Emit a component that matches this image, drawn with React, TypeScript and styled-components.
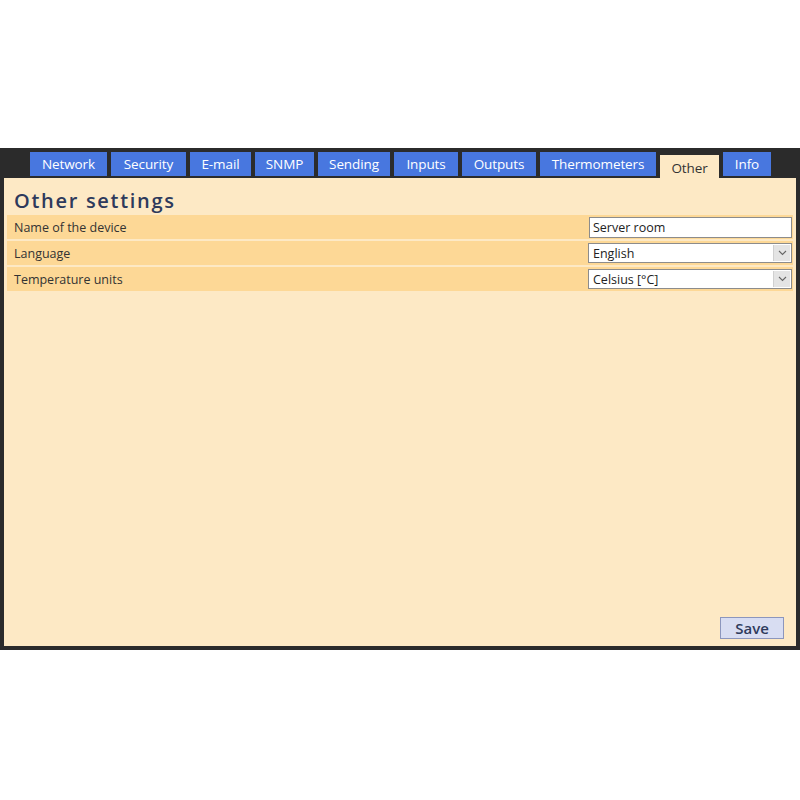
import React from "react";
import styled, { createGlobalStyle } from "styled-components";

const Global = createGlobalStyle`
  html, body { margin: 0; padding: 0; background: #ffffff; }
  body { font-family: "Open Sans", "DejaVu Sans", sans-serif; }
`;

const Page = styled.div`
  width: 800px;
  height: 800px;
  display: flex;
  flex-direction: column;
  justify-content: center;
`;

const Frame = styled.div`
  background: #2b2b2b;
  padding: 4px;
  height: 502px;
  box-sizing: border-box;
  display: flex;
  flex-direction: column;
  margin-top: -2px;
`;

const TabBar = styled.div`
  display: flex;
  gap: 4px;
  padding-left: 26px;
  height: 26px;
`;

const Tab = styled.div<{ $w: number }>`
  width: ${(p) => p.$w}px;
  height: 24px;
  background: #4877df;
  color: #ffffff;
  font-size: 13.5px;
  line-height: 24px;
  text-align: center;
  white-space: nowrap;
  letter-spacing: -0.1px;
`;

const ActiveTab = styled(Tab)`
  height: 23px;
  margin-top: 3px;
  background: #fde9c5;
  color: #333333;
  line-height: 27px;
`;

const Panel = styled.div`
  flex: 1;
  background: #fde9c5;
  display: flex;
  flex-direction: column;
  padding: 10px 3px 7px 3px;
`;

const Title = styled.h1`
  margin: 0 0 1px 7px;
  font-size: 20px;
  font-weight: 600;
  letter-spacing: 1.7px;
  color: #2e3a5c;
  line-height: 26px;
`;

const Rows = styled.div`
  display: flex;
  flex-direction: column;
  gap: 2px;
`;

const Row = styled.div`
  height: 24px;
  background: #fdd896;
  display: flex;
  align-items: center;
  justify-content: space-between;
  padding: 0 1px 0 7px;
`;

const Label = styled.span`
  font-size: 12.5px;
  color: #333333;
`;

const TextInput = styled.input`
  width: 203px;
  height: 21px;
  box-sizing: border-box;
  border: 1px solid #8c8c8c;
  background: #ffffff;
  font-family: inherit;
  font-size: 12.5px;
  color: #222;
  padding: 0 3px;
  outline: none;
`;

const SelectBox = styled.div`
  width: 204px;
  height: 20px;
  box-sizing: border-box;
  border: 1px solid #8c8c8c;
  background: #ffffff;
  display: flex;
  align-items: center;
  font-size: 12.5px;
  color: #222;
`;

const SelectText = styled.span`
  flex: 1;
  padding-left: 4px;
`;

const Arrow = styled.span`
  width: 16px;
  height: 16px;
  margin-right: 1px;
  background: #e4e4e4;
  border-left: 1px solid #d0d0d0;
  display: flex;
  align-items: center;
  justify-content: center;
`;

const Spacer = styled.div`
  flex: 1;
`;

const Footer = styled.div`
  display: flex;
  justify-content: flex-end;
  padding-right: 9px;
`;

const SaveButton = styled.button`
  width: 64px;
  height: 22px;
  background: #d8ddf2;
  border: 1px solid #8c96bd;
  color: #2e3a5c;
  font-family: inherit;
  font-size: 15px;
  font-weight: 600;
  padding: 0;
`;

const Chevron = () => (
  <svg width="9" height="6" viewBox="0 0 9 6">
    <path d="M1 1 L4.5 4.5 L8 1" fill="none" stroke="#666" strokeWidth="1.1" />
  </svg>
);

const tabs: { name: string; w: number; active?: boolean }[] = [
  { name: "Network", w: 77 },
  { name: "Security", w: 75 },
  { name: "E-mail", w: 61 },
  { name: "SNMP", w: 59 },
  { name: "Sending", w: 72 },
  { name: "Inputs", w: 64 },
  { name: "Outputs", w: 74 },
  { name: "Thermometers", w: 116 },
  { name: "Other", w: 59, active: true },
  { name: "Info", w: 48 },
];

export default function App() {
  return (
    <Page>
      <Global />
      <Frame>
        <TabBar>
          {tabs.map((t) =>
            t.active ? (
              <ActiveTab key={t.name} $w={t.w}>
                {t.name}
              </ActiveTab>
            ) : (
              <Tab key={t.name} $w={t.w}>
                {t.name}
              </Tab>
            )
          )}
        </TabBar>
        <Panel>
          <Title>Other settings</Title>
          <Rows>
            <Row>
              <Label>Name of the device</Label>
              <TextInput defaultValue="Server room" />
            </Row>
            <Row>
              <Label>Language</Label>
              <SelectBox>
                <SelectText>English</SelectText>
                <Arrow><Chevron /></Arrow>
              </SelectBox>
            </Row>
            <Row>
              <Label>Temperature units</Label>
              <SelectBox>
                <SelectText>Celsius [°C]</SelectText>
                <Arrow><Chevron /></Arrow>
              </SelectBox>
            </Row>
          </Rows>
          <Spacer />
          <Footer>
            <SaveButton>Save</SaveButton>
          </Footer>
        </Panel>
      </Frame>
    </Page>
  );
}
